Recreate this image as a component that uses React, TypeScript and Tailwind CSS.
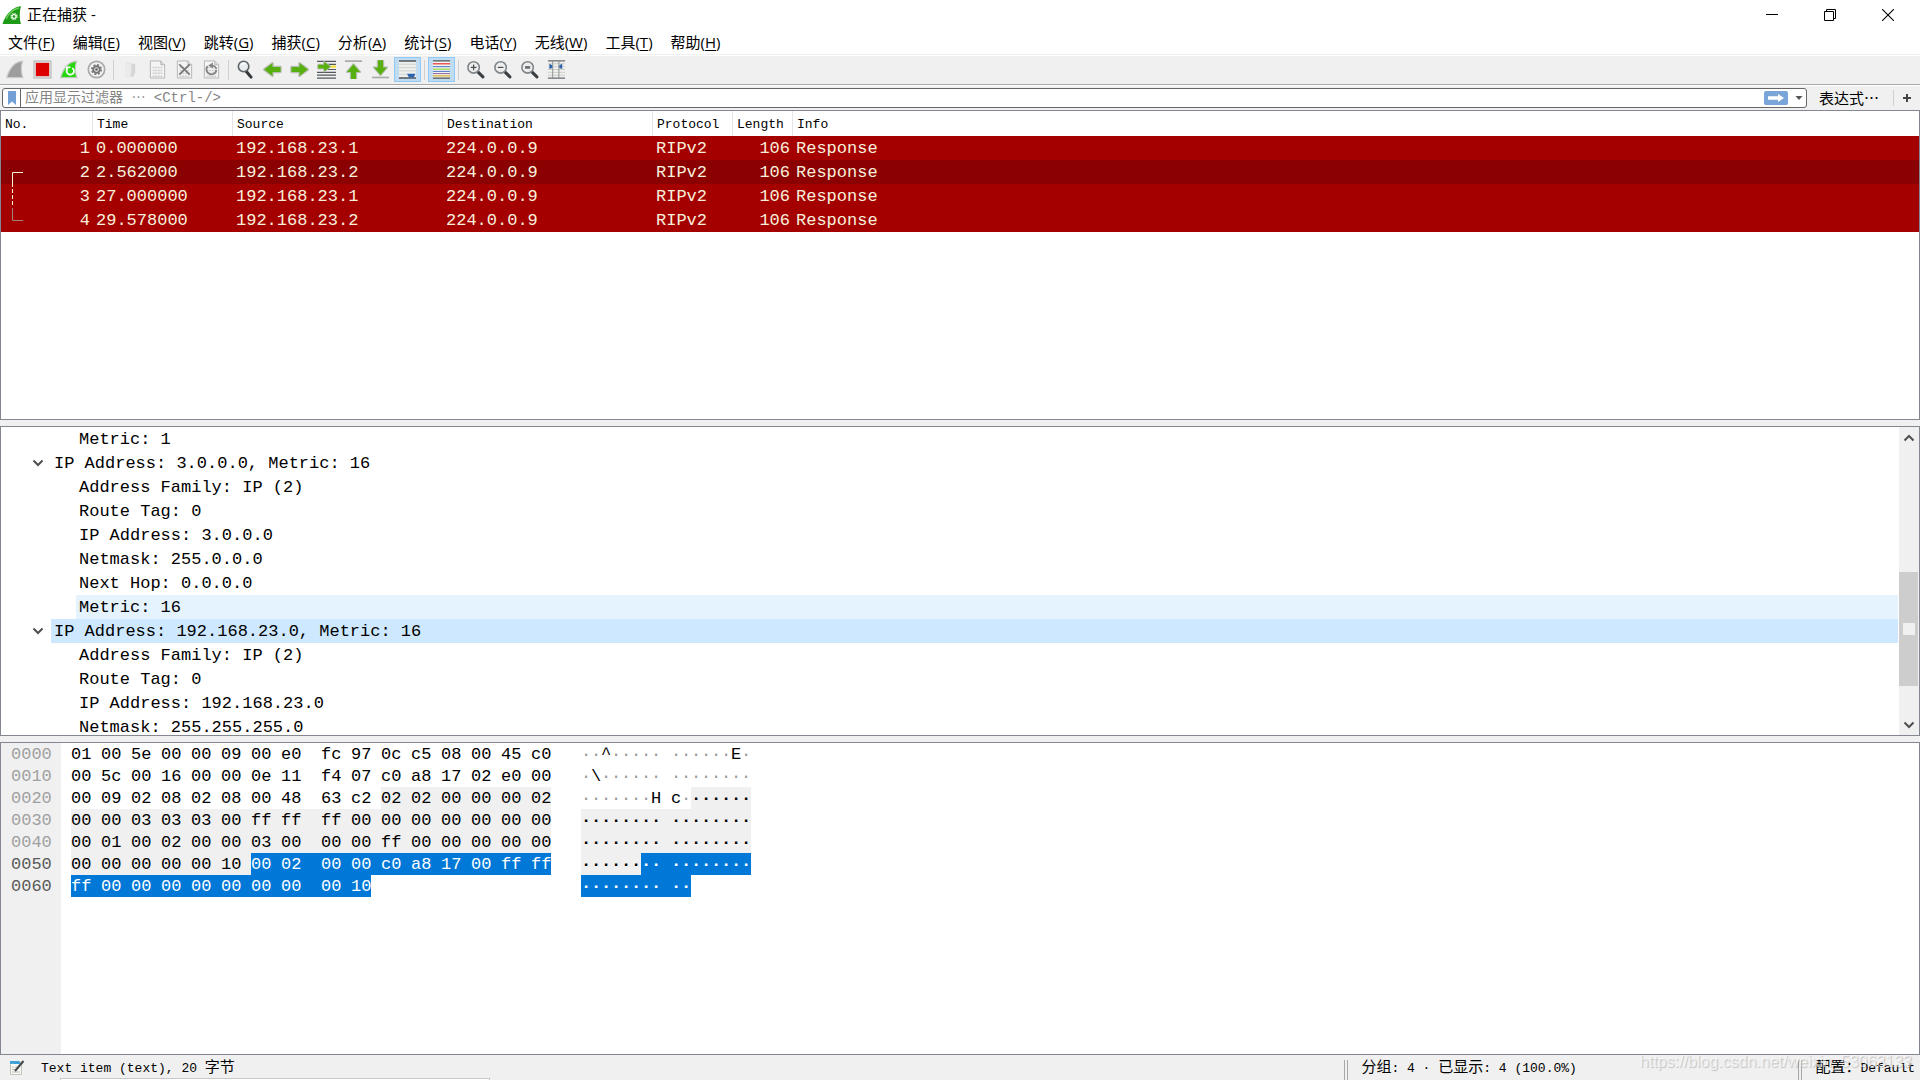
import React from "react";

const SONG = "font-['Liberation_Mono','Noto_Sans_CJK_SC',monospace]";
const MONO = "font-['Liberation_Mono',monospace]";
const UI = "font-['Open_Sans','Noto_Sans_CJK_SC',sans-serif]";

const menus: [string, string][] = [
  ["文件", "F"], ["编辑", "E"], ["视图", "V"], ["跳转", "G"], ["捕获", "C"], ["分析", "A"],
  ["统计", "S"], ["电话", "Y"], ["无线", "W"], ["工具", "T"], ["帮助", "H"],
];

const FIN = "M0.7 18.5C3.5 9 9 1.8 17.5 1.2C15.8 5.5 15.6 13 17.8 18.5Z";
const ARROW = "M1.5 7.3H10V3.2L18.8 10L10 16.8V12.7H1.5Z";

function GreenArrow({ transform }: { transform?: string }) {
  return (
    <g transform={transform}>
      <path d={ARROW} fill="#58b010" stroke="#b9bfb4" strokeWidth="2.4" strokeLinejoin="round" />
      <path d={ARROW} fill="#58b010" />
    </g>
  );
}

function Page() {
  return (
    <g>
      <path d="M2.5 1H13.5L17.5 5V19H2.5Z" fill="#f4f4f4" stroke="#b4b4b4" />
      <path d="M13.5 1V5H17.5" stroke="#b4b4b4" fill="#dcdcdc" />
      <path d="M5 8H15M5 11H15M5 14H15M5 17H15" stroke="#cdcdcd" strokeWidth="1.6" strokeDasharray="2 0.7" />
    </g>
  );
}

function Lens({ sign }: { sign?: "plus" | "minus" | "equal" }) {
  return (
    <g>
      <path d="M12.5 12.5L17.8 17.8" stroke="#3b3f42" strokeWidth="3.2" strokeLinecap="round" />
      <circle cx="8" cy="7.8" r="6" fill="#eeeeee" stroke="#80868a" strokeWidth="1.7" />
      {sign === "plus" && <path d="M5 7.8H11M8 4.8V10.8" stroke="#4c4f52" strokeWidth="1.3" />}
      {sign === "minus" && <path d="M5 7.8H11" stroke="#4c4f52" strokeWidth="1.3" />}
      {sign === "equal" && <path d="M5.3 7.8H10.7" stroke="#686c70" strokeWidth="2.8" />}
    </g>
  );
}

const tools: { label: string; on?: boolean; icon?: React.ReactNode }[] = [
  { label: "开始", icon: <path d={FIN} fill="#9d9d9d" stroke="#cdcdcd" strokeWidth="1.2" /> },
  { label: "停止", icon: <><rect x="1" y="1" width="18" height="18" fill="#dedede" stroke="#b6b6b6" /><rect x="3" y="3" width="14" height="14" fill="#dc0000" /></> },
  { label: "重新开始", icon: <><path d={FIN} fill="#26d80d" stroke="#c2c9c0" strokeWidth="1.2" /><path d="M8.2 8.6A3.9 3.9 0 1 0 14.6 10.4M7.2 11.2V7.6H11M14.6 10.4L13 8.4" stroke="#fff" strokeWidth="1.7" /></> },
  { label: "选项", icon: <><circle cx="10" cy="10" r="8.6" fill="#f1f1f1" stroke="#aaaaaa" strokeWidth="1.8" /><circle cx="10" cy="10" r="4.9" stroke="#777" strokeWidth="1.8" strokeDasharray="2 1.85" /><circle cx="10" cy="10" r="3.5" fill="#ddd" stroke="#777" strokeWidth="2" /><circle cx="10" cy="10" r="1.3" fill="#666" /></> },
  { label: "|" },
  { label: "打开", icon: <><path d="M4.5 2.5H11V17.5H4.5Z" fill="#e4e4e4" /><path d="M11 4H15V13L13 17.5H9.5V15L11 13Z" fill="#d6d6d6" /><path d="M4.5 3L10 5V17.5L4.5 16Z" fill="#ebebeb" /></> },
  { label: "保存", icon: <Page /> },
  { label: "关闭", icon: <><Page /><path d="M4.5 4.5L15.5 15.5M15.5 4.5L4.5 15.5" stroke="#777" strokeWidth="1.8" /></> },
  { label: "重新加载", icon: <><Page /><path d="M5.8 6.5A5.3 5.3 0 1 0 15.2 10.5" stroke="#858585" strokeWidth="2" /><path d="M11.5 2.5L6.5 5.8L11.5 9" fill="#858585" /><path d="M10 5.8Q14 5.8 15.2 9.5" stroke="#858585" strokeWidth="1.8" /></> },
  { label: "|" },
  { label: "查找", icon: <><path d="M10.5 11.5L15.8 18" stroke="#34383b" strokeWidth="3.2" strokeLinecap="round" /><circle cx="8" cy="6.8" r="5.5" fill="#e9edef" stroke="#5f6568" strokeWidth="1.7" /><path d="M5 5.5Q7 3 10 4" stroke="#fff" strokeWidth="1.4" /></> },
  { label: "后退", icon: <GreenArrow transform="translate(20 0) scale(-1 1)" /> },
  { label: "前进", icon: <GreenArrow /> },
  { label: "转到", icon: <><path d="M0 1.5H20M9 4.5H20M0 13H20M0 16H20M0 19H20M9 10H20" stroke="#52585c" strokeWidth="1.3" /><path d="M12 7H20" stroke="#f6e13c" strokeWidth="2.4" /><GreenArrow transform="translate(0 -0.5) scale(0.75)" /></> },
  { label: "首个", icon: <><path d="M1 1.2H19" stroke="#a9aca9" strokeWidth="1.8" /><GreenArrow transform="translate(0 21.5) rotate(-90) scale(0.9 1)" /></> },
  { label: "末尾", icon: <><path d="M1 18.4H19" stroke="#a9aca9" strokeWidth="1.8" /><GreenArrow transform="translate(20 -1.2) rotate(90) scale(0.9 1)" /></> },
  { label: "自动滚动", on: true, icon: <><rect x="1" y="1" width="18" height="18" fill="#ecefec" /><path d="M1 1H19M1 19H19" stroke="#4f5457" strokeWidth="1.5" /><path d="M1 4.5H19M1 8H19M1 11.5H19M1 15H10" stroke="#cfd3cc" /><path d="M9.5 14.5H18.5L16.5 18.5H11.5Z" fill="#2c63ad" /></> },
  { label: "|" },
  { label: "着色", on: true, icon: <><rect x="1" y="1" width="18" height="18" fill="#f3f3f0" /><path d="M1 1H19M1 19H19" stroke="#4f5457" strokeWidth="1.4" /><path d="M1 4H19" stroke="#e8383a" strokeWidth="1.3" /><path d="M1 7H19" stroke="#4a78c8" strokeWidth="1.1" /><path d="M1 9.6H19" stroke="#80d22c" strokeWidth="1.1" /><path d="M1 12H19" stroke="#527ac8" strokeWidth="1.1" /><path d="M1 14.3H19" stroke="#8d6ca6" strokeWidth="1.1" /><path d="M1 16.7H19" stroke="#d4ac22" strokeWidth="1.2" /></> },
  { label: "|" },
  { label: "放大", icon: <Lens sign="plus" /> },
  { label: "缩小", icon: <Lens sign="minus" /> },
  { label: "正常大小", icon: <Lens sign="equal" /> },
  { label: "调整列宽", icon: <><path d="M1 1H19M1 19H19" stroke="#666b6e" strokeWidth="1.4" /><path d="M1 4H19M1 7H19M1 10H19M1 13H19M1 16H19" stroke="#cbcec5" /><path d="M6 1V19M12.5 1V19" stroke="#8b8f90" /><path d="M2.5 4L5.5 5.5V8.5L2.5 9.5Z M16 4L13 5.5V8.5L16 9.5Z" fill="#2c63ad" /></> },
];

const packets = [
  ["1", "0.000000", "192.168.23.1"],
  ["2", "2.562000", "192.168.23.2"],
  ["3", "27.000000", "192.168.23.1"],
  ["4", "29.578000", "192.168.23.2"],
];

const treeRows: { text: string; parent?: boolean; bg?: string }[] = [
  { text: "Metric: 1" },
  { text: "IP Address: 3.0.0.0, Metric: 16", parent: true },
  { text: "Address Family: IP (2)" },
  { text: "Route Tag: 0" },
  { text: "IP Address: 3.0.0.0" },
  { text: "Netmask: 255.0.0.0" },
  { text: "Next Hop: 0.0.0.0" },
  { text: "Metric: 16", bg: "bg-[#e5f3ff]" },
  { text: "IP Address: 192.168.23.0, Metric: 16", parent: true, bg: "bg-[#cde8ff]" },
  { text: "Address Family: IP (2)" },
  { text: "Route Tag: 0" },
  { text: "IP Address: 192.168.23.0" },
  { text: "Netmask: 255.255.255.0" },
];

const dump = [
  "01 00 5e 00 00 09 00 e0 fc 97 0c c5 08 00 45 c0",
  "00 5c 00 16 00 00 0e 11 f4 07 c0 a8 17 02 e0 00",
  "00 09 02 08 02 08 00 48 63 c2 02 02 00 00 00 02",
  "00 00 03 03 03 00 ff ff ff 00 00 00 00 00 00 00",
  "00 01 00 02 00 00 03 00 00 00 ff 00 00 00 00 00",
  "00 00 00 00 00 10 00 02 00 00 c0 a8 17 00 ff ff",
  "ff 00 00 00 00 00 00 00 00 10",
].map((line) => line.split(" "));

const LAYER_START = 42;
const FIELD_START = 86;

function tone(pos: number) {
  if (pos >= FIELD_START) return "bg-[#0078d7] text-white";
  if (pos >= LAYER_START) return "bg-[#f0f0f0] text-black";
  return "text-black";
}

function HexRow({ bytes, row }: { bytes: string[]; row: number }) {
  const last = bytes.length - 1;
  return (
    <div className="flex h-[22px] leading-6">
      <span className={`w-[60px] shrink-0 pl-[10px] ${row > 4 ? "text-[#5a5a5a]" : "text-[#a0a0a0]"}`}>
        {(row * 16).toString(16).padStart(4, "0")}
      </span>
      <div className="ml-[10px] flex w-[510px] shrink-0">
        {bytes.map((b, i) => (
          <span key={i} className={`${tone(row * 16 + i)} ${i === last ? "w-5" : i === 7 ? "w-10" : "w-[30px]"}`}>{b}</span>
        ))}
      </div>
      <div className="flex">
        {bytes.map((b, i) => {
          const code = parseInt(b, 16);
          const printable = code > 32 && code < 127;
          const pos = row * 16 + i;
          return (
            <span key={i} className={`${tone(pos)} ${i === 7 ? "w-5" : "w-[10px]"}`}>
              {printable ? String.fromCharCode(code) : <span className={pos < LAYER_START ? "text-[#999999]" : "font-bold"}>·</span>}
            </span>
          );
        })}
      </div>
    </div>
  );
}

function Chevron({ up }: { up?: boolean }) {
  return (
    <svg viewBox="0 0 12 8" className="h-2 w-3" fill="none" aria-hidden="true">
      <path d={up ? "M1.5 6.5L6 2L10.5 6.5" : "M1.5 1.5L6 6L10.5 1.5"} stroke="#505050" strokeWidth="2" />
    </svg>
  );
}

export default function App() {
  const cell = "truncate pl-[3px] pt-[2px]";
  const head = "border-r border-[#e5e5e5] pl-1 pt-[3px] text-left font-normal";
  return (
    <div className="relative flex h-screen flex-col overflow-hidden bg-white text-black">
      <header className={`flex h-[29px] shrink-0 items-center pl-[2px] pr-[3px] text-[15px] ${UI}`}>
        <svg viewBox="0 0 20 20" className="size-5" aria-hidden="true">
          <path d="M0.5 19C3.5 9.5 10 2 19 1.2C17.5 6 17.3 14 19 19Z" fill="#1d9a17" />
          <path d="M4 14C7 8 11 4 17 3" stroke="#6ad05a" strokeWidth="1.4" fill="none" />
          <circle cx="12" cy="11.5" r="2.6" fill="none" stroke="#d4f4d0" strokeWidth="2" strokeDasharray="1.4 0.64" />
          <circle cx="12" cy="11.5" r="1.9" fill="none" stroke="#fff" />
        </svg>
        <h1 className="ml-[5px]">正在捕获 -</h1>
        <div className="ml-auto flex">
          <button aria-label="最小化" className="flex h-7 w-[58px] items-center justify-center"><svg viewBox="0 0 12 12" className="size-3"><path d="M0 5.5H12" stroke="#000" /></svg></button>
          <button aria-label="还原" className="flex h-7 w-[58px] items-center justify-center"><svg viewBox="0 0 12 12" className="size-3" fill="none" stroke="#000"><path d="M0.5 2.5H9.5V11.5H0.5ZM2.5 2.5V0.5H11.5V9.5H9.5" /></svg></button>
          <button aria-label="关闭" className="flex h-7 w-[58px] items-center justify-center"><svg viewBox="0 0 12 12" className="size-3"><path d="M0 0L12 12M12 0L0 12" stroke="#000" strokeWidth="1.1" /></svg></button>
        </div>
      </header>

      <nav className={`flex h-[26px] shrink-0 items-center gap-[18px] border-b border-[#f0f0f0] pl-2 pt-[2px] text-[15px] ${UI}`}>
        {menus.map(([name, key]) => (
          <button key={key} className="whitespace-nowrap">{name}(<span className="underline underline-offset-2">{key}</span>)</button>
        ))}
      </nav>

      <div className="mt-px flex h-[29px] shrink-0 items-start border-b border-[#a8a8a8] bg-[#f0f0f0] pl-[2px] pt-px">
        {tools.map((t, i) =>
          t.icon ? (
            <button key={i} aria-label={t.label} className={`flex h-[25px] w-[27px] items-center justify-center ${t.on ? "border border-[#90c8f6] bg-[#c0dcf3]" : ""}`}>
              <svg viewBox="0 0 20 20" className="size-[19px] shrink-0" fill="none" aria-hidden="true">{t.icon}</svg>
            </button>
          ) : (
            <span key={i} className="mx-[3px] mt-[3px] h-5 w-px bg-[#d0d0d0]" />
          ),
        )}
      </div>

      <div className={`flex h-[25px] shrink-0 items-center border-t border-white bg-[#f0f0f0] pl-[2px] ${SONG}`}>
        <div className="flex h-5 grow items-center rounded-[3px] border border-[#666] bg-white">
          <button aria-label="书签" className="flex h-full w-[18px] items-center justify-center border-r border-[#666]">
            <svg viewBox="0 0 8 14" className="h-[14px] w-2"><path d="M0 0H8V14L4 10.5L0 14Z" fill="#74a0d6" /></svg>
          </button>
          <input aria-label="应用显示过滤器" placeholder="应用显示过滤器 ⋯ <Ctrl-/>" className="h-full min-w-0 grow pl-1 text-[14px] outline-none placeholder:text-[#858585]" />
          <button aria-label="应用" className="flex h-[14px] w-6 items-center justify-center rounded-[2px] bg-[#79a5d9]">
            <svg viewBox="0 0 18 10" className="h-[10px] w-[18px]"><path d="M1 3.2H11V1L17 5L11 9V6.8H1Z" fill="#fff" /></svg>
          </button>
          <button aria-label="历史" className="flex h-full w-[18px] items-center justify-center pl-1">
            <svg viewBox="0 0 8 4" className="h-1 w-2"><path d="M0.5 0H7.5L4 4Z" fill="#555" /></svg>
          </button>
        </div>
        <button className="ml-3 whitespace-nowrap font-['Noto_Sans_CJK_SC',sans-serif] text-[15px]">表达式…</button>
        <span className="ml-[14px] h-4 w-px bg-[#cfcfcf]" />
        <button aria-label="添加" className="flex w-[26px] items-center justify-center"><svg viewBox="0 0 8 8" className="size-2"><path d="M0 4H8M4 0V8" stroke="#444" strokeWidth="2" /></svg></button>
      </div>

      <main className="flex min-h-0 grow flex-col gap-[6px] bg-[#f0f0f0]">
        <section className="relative min-h-0 shrink basis-0 grow-[310] overflow-hidden border border-[#828790] bg-white">
          <table className="w-full table-fixed border-separate border-spacing-0">
            <colgroup>
              <col className="w-[92px]" /><col className="w-[140px]" /><col className="w-[210px]" /><col className="w-[210px]" />
              <col className="w-[80px]" /><col className="w-[60px]" /><col />
            </colgroup>
            <thead>
              <tr className={`h-[25px] text-[13px] ${SONG}`}>
                <th className={head}>No.</th><th className={head}>Time</th><th className={head}>Source</th><th className={head}>Destination</th>
                <th className={head}>Protocol</th><th className={head}>Length</th><th className="pl-1 pt-[3px] text-left font-normal">Info</th>
              </tr>
            </thead>
            <tbody className={`text-[17px] leading-[22px] text-[#f8f0dc] ${MONO}`}>
              {packets.map(([no, time, source]) => (
                <tr key={no} className={`h-6 ${no === "2" ? "bg-[#8b0000]" : "bg-[#a40000]"}`}>
                  <td className="pr-[3px] pt-[2px] text-right">{no}</td>
                  <td className={cell}>{time}</td>
                  <td className={cell}>{source}</td>
                  <td className={cell}>224.0.0.9</td>
                  <td className={cell}>RIPv2</td>
                  <td className="pr-[3px] pt-[2px] text-right">106</td>
                  <td className={cell}>Response</td>
                </tr>
              ))}
            </tbody>
          </table>
          <svg viewBox="0 0 12 50" className="absolute left-[11px] top-[60px] h-[50px] w-3" fill="none" aria-hidden="true">
            <path d="M11 1.5H0.5V16" stroke="#f8f0dc" />
            <path d="M0.5 18V36" stroke="#f8f0dc" strokeDasharray="4 2" />
            <path d="M0.5 37V49.5H11" stroke="#a08078" />
          </svg>
        </section>

        <section className="flex min-h-0 shrink basis-0 grow-[310] overflow-hidden border border-[#828790] bg-white">
          <ul className={`min-w-0 grow overflow-hidden pr-px text-[17px] leading-[26px] ${MONO}`}>
            {treeRows.map((r, i) => (
              <li key={i} className={`flex h-6 ${r.parent ? "pl-[29px]" : "pl-[75px]"}`}>
                {r.parent && <button aria-label="折叠" className="flex w-[21px] items-center pl-[2px]"><Chevron /></button>}
                <span className={`grow whitespace-pre pl-[3px] ${r.bg ?? ""}`}>{r.text}</span>
              </li>
            ))}
          </ul>
          <div className="flex w-5 shrink-0 flex-col bg-[#f0f0f0] pr-px">
            <button aria-label="向上滚动" className="flex h-[21px] shrink-0 items-center justify-center"><Chevron up /></button>
            <div className="grow-[124]" />
            <div className="flex h-[114px] shrink-0 items-center justify-center bg-[#cdcdcd]"><span className="size-3 bg-[#f0f0f0]" /></div>
            <div className="grow-[28]" />
            <button aria-label="向下滚动" className="flex h-[21px] shrink-0 items-center justify-center"><Chevron /></button>
          </div>
        </section>

        <section className={`flex min-h-0 shrink basis-0 grow-[313] overflow-hidden border border-[#828790] bg-white text-[17px] ${MONO}`}>
          <div className="h-full grow bg-[linear-gradient(to_right,#f0f0f0_60px,white_60px)]">
            {dump.map((bytes, row) => <HexRow key={row} bytes={bytes} row={row} />)}
          </div>
        </section>
      </main>

      <footer className={`relative flex h-[25px] shrink-0 items-center overflow-hidden bg-[#f0f0f0] pl-[9px] pt-[4px] text-[13px] ${SONG}`}>
        <button aria-label="捕获文件属性" className="pb-1">
          <svg viewBox="0 0 16 16" className="size-4" aria-hidden="true">
            <path d="M1.5 2H12.5V14.5H1.5Z" fill="#f7f7f2" stroke="#c2c5bd" />
            <path d="M1 1H10L12 4H1Z" fill="#3fa0d8" />
            <path d="M3 7H8M3 9.5H7M3 12H11" stroke="#bcc0b8" />
            <path d="M14.5 1L6 11" stroke="#44484b" strokeWidth="2" />
            <path d="M3 4L6 7" stroke="#fff" strokeWidth="1.5" />
          </svg>
        </button>
        <span className="ml-4 grow whitespace-pre">Text item (text), 20 <span className="text-[15px]">字节</span></span>
        <span className="h-5 w-1 border-x border-[#a8a8a8]" />
        <span className="w-[450px] whitespace-pre pl-[13px]"><span className="text-[15px]">分组</span>: 4 · <span className="text-[15px]">已显示</span>: 4 (100.0%)</span>
        <span className="h-5 w-1 border-x border-[#a8a8a8]" />
        <span className="whitespace-pre pl-[13px] pr-[5px]"><span className="text-[15px]">配置：</span>Default</span>
        <span className="absolute bottom-0 left-[60px] h-[2px] w-[430px] border border-b-0 border-[#c8c8c8] bg-white" />
      </footer>
      <p className="pointer-events-none absolute bottom-2 right-2 font-['Liberation_Sans',sans-serif] text-[16px] leading-5 text-white/60 [text-shadow:1px_1px_1px_rgba(0,0,0,0.2)]">https://blog.csdn.net/weixin_53063133</p>
    </div>
  );
}
